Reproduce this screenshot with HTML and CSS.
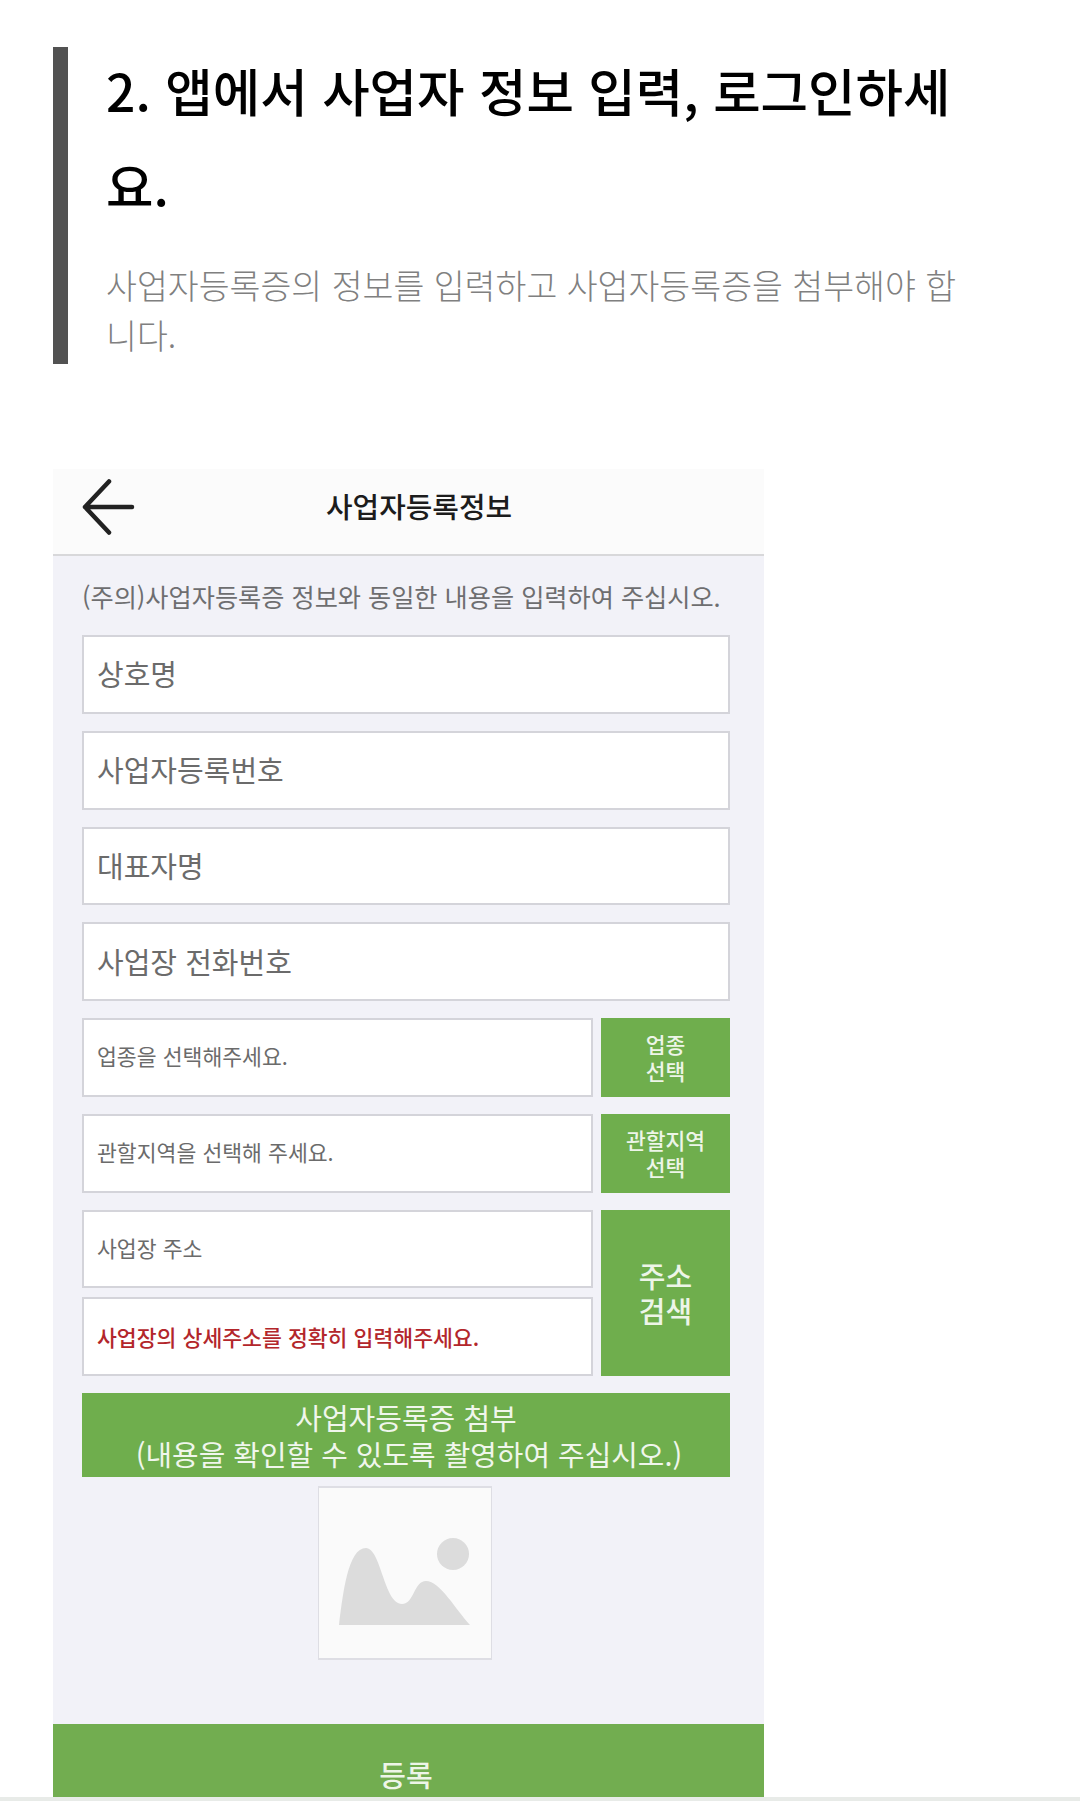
FILE: index.html
```html
<!DOCTYPE html>
<html lang="ko">
<head>
  <meta charset="UTF-8">
  <title>사업자등록정보</title>
  <link rel="stylesheet" href="styles.css">
</head>
<body>
  <div class="intro">
    <h2>2. 앱에서 사업자 정보 입력, 로그인하세요.</h2>
    <p>사업자등록증의 정보를 입력하고 사업자등록증을 첨부해야 합니다.</p>
  </div>

  <div class="shot">
    <div class="topbar">
      <svg class="back" width="54" height="56" viewBox="0 0 54 56">
        <path d="M50 28H3M27 2.500 3 28l24 25.500" fill="none" stroke="#222" stroke-width="4.500" stroke-linecap="round" stroke-linejoin="round"/>
      </svg>
      <div class="topbar-title">사업자등록정보</div>
    </div>

    <div class="form">
      <div class="notice">(주의)사업자등록증 정보와 동일한 내용을 입력하여 주십시오.</div>
      <div class="field big">상호명</div>
      <div class="field big">사업자등록번호</div>
      <div class="field big">대표자명</div>
      <div class="field big">사업장 전화번호</div>

      <div class="row">
        <div class="field small">업종을 선택해주세요.</div>
        <div class="btn">업종<br>선택</div>
      </div>
      <div class="row">
        <div class="field small">관할지역을 선택해 주세요.</div>
        <div class="btn">관할지역<br>선택</div>
      </div>
      <div class="row">
        <div class="address-fields">
          <div class="field small">사업장 주소</div>
          <div class="field small red">사업장의 상세주소를 정확히 입력해주세요.</div>
        </div>
        <div class="btn btn-big">주소<br>검색</div>
      </div>

      <div class="attach">사업자등록증 첨부<span class="attach-note">(내용을 확인할 수 있도록 촬영하여 주십시오.)</span></div>

      <div class="photo">
        <svg width="172" height="172" viewBox="0 0 172 172">
          <circle cx="134" cy="66" r="16" fill="#dcdcdc"/>
          <path d="M20 137C24 105 29 60 47 60 62 60 65 116 83 116 95 116 95 93 107 93 121 93 137 122 151 137Z" fill="#dcdcdc"/>
        </svg>
      </div>
    </div>

    <div class="submit">등록</div>
  </div>

  <div class="bottom-line"></div>
</body>
</html>
```

FILE: styles.css
```css
body {
  margin: 0;
  height: 1801px;
  overflow: hidden;
  background: #fff;
  font-family: "Noto Sans CJK KR", "Noto Sans", sans-serif;
}
.intro {
  display: flow-root;
  margin: 47px 0 0 53px;
  width: 920px;
  height: 317px;
  box-sizing: border-box;
  border-left: 15px solid #525252;
  padding-left: 38px;
}
.intro h2 {
  margin: -5px 0 0;
  font-size: 51.600px;
  font-weight: 500;
  line-height: 95px;
  color: #000;
}
.intro p {
  margin: 28px 0 0;
  font-size: 33.600px;
  font-weight: 300;
  line-height: 50px;
  color: #808080;
}
.shot {
  margin: 105px 0 0 53px;
  width: 711px;
  height: 1328px;
  background: #f2f2f8;
  display: flex;
  flex-direction: column;
}
.topbar {
  height: 87px;
  flex: none;
  box-sizing: border-box;
  background: #fbfbfb;
  border-bottom: 2px solid #d8d8da;
  display: flex;
  align-items: center;
  padding: 0 0 10px 29px;
}
.back {
  flex: none;
}
.topbar-title {
  margin: 0 0 4px 190px;
  font-size: 28.900px;
  font-weight: 500;
  color: #1c1c1c;
}
.form {
  flex: 1;
  padding: 0 34px 0 29px;
}
.notice {
  height: 79px;
  display: flex;
  align-items: center;
  font-size: 25.200px;
  color: #6e6e70;
  white-space: nowrap;
}
.field {
  height: 78.750px;
  box-sizing: border-box;
  background: #fff;
  border: 2px solid #d4d4da;
  display: flex;
  align-items: center;
  padding-left: 13px;
  color: #6b6b6b;
}
.big {
  font-size: 29px;
  margin-bottom: 17px;
  padding-bottom: 2px;
}
.small {
  font-size: 21.600px;
  padding-bottom: 3px;
}
.red {
  color: #b3262b;
  font-weight: 500;
  padding-bottom: 1px;
}
.row {
  display: flex;
  gap: 8px;
  margin-bottom: 17px;
}
.row .field {
  width: 511px;
  flex: none;
}
.btn {
  flex: 1;
  display: flex;
  align-items: center;
  justify-content: center;
  text-align: center;
  background: #6fae4d;
  color: #edf5e8;
  font-size: 21.500px;
  font-weight: 500;
  line-height: 27px;
}
.address-fields {
  display: flex;
  flex-direction: column;
  gap: 9px;
}
.btn-big {
  font-size: 29px;
  line-height: 35px;
}
.attach {
  height: 84px;
  background: #6fae4d;
  color: #f0f6ec;
  font-size: 29px;
  line-height: 36px;
  text-align: center;
  box-sizing: border-box;
  padding-top: 6px;
  white-space: nowrap;
}
.attach-note {
  display: block;
  padding-left: 6px;
  font-size: 28.900px;
}
.photo {
  width: 174px;
  height: 174px;
  box-sizing: border-box;
  margin: 9px 0 0 236px;
  background: #fafafa;
  border: 2px solid #dedee4;
  border-left-width: 1px;
  border-right-width: 1px;
}
.photo svg {
  display: block;
}
.submit {
  height: 73px;
  flex: none;
  box-sizing: border-box;
  background: #72ad50;
  color: #edf5e8;
  font-size: 29px;
  font-weight: 500;
  text-align: center;
  padding: 28px 5px 0 0;
  line-height: 44px;
}
.bottom-line {
  height: 5px;
  background: #e8ebe8;
}
```
